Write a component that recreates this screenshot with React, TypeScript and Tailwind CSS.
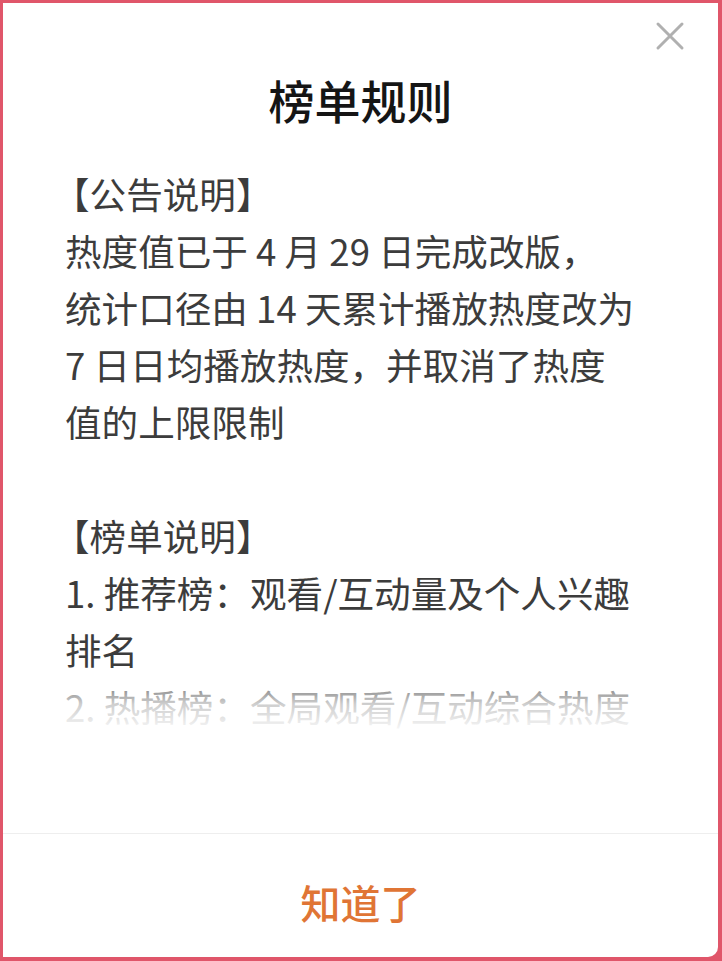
import React from 'react';

const announce = [
    '热度值已于 4 月 29 日完成改版，',
    '统计口径由 14 天累计播放热度改为',
    '7 日日均播放热度，并取消了热度',
    '值的上限限制',
];

const rankLines = [
    '1. 推荐榜：观看/互动量及个人兴趣',
    '排名',
    '2. 热播榜：全局观看/互动综合热度',
];

export default function App() {
    return (
        <div
            className="w-[722px] h-[961px] bg-[#e0566a] pt-[3px] pl-[3px] pr-[4px] pb-[4px]"
            style={{ fontFamily: '"Noto Sans CJK SC", "Noto Sans", sans-serif' }}
        >
            <div className="relative w-full h-full bg-white rounded-br-[10px] flex flex-col">
                {/* Close */}
                <button className="absolute right-[31px] top-[16px] w-[34px] h-[34px] flex items-center justify-center">
                    <svg width="30" height="30" viewBox="0 0 30 30" fill="none">
                        <path d="M3 3 L27 27 M27 3 L3 27" stroke="#b0b0b0" strokeWidth="3" strokeLinecap="round" />
                    </svg>
                </button>

                {/* Title */}
                <div className="pt-[68px] text-center text-[46px] leading-[56px] font-medium text-[#151515]">
                    榜单规则
                </div>

                {/* Body */}
                <div className="relative flex-1 overflow-hidden pt-[38px] pl-[62px] pr-[30px] text-[36.6px] leading-[57px] text-[#3c3c3c]">
                    <div className="-ml-[12px]">【公告说明】</div>
                    {announce.map((line, i) => (
                        <div key={i} className="whitespace-nowrap">{line}</div>
                    ))}
                    <div className="h-[57px]" />
                    <div className="-ml-[12px]">【榜单说明】</div>
                    {rankLines.map((line, i) => (
                        <div key={i} className="whitespace-nowrap">{line}</div>
                    ))}
                    <div className="absolute left-0 right-0 top-[546px] h-[62px] bg-gradient-to-b from-white/10 via-white/75 to-white" />
                    <div className="absolute left-0 right-0 top-[608px] bottom-0 bg-white" />
                </div>

                {/* Footer */}
                <div className="border-t border-[#eeeeee] h-[124px] pt-[12px] flex items-center justify-center">
                    <span className="text-[40px] font-medium text-[#e07535]">知道了</span>
                </div>
            </div>
        </div>
    );
}
